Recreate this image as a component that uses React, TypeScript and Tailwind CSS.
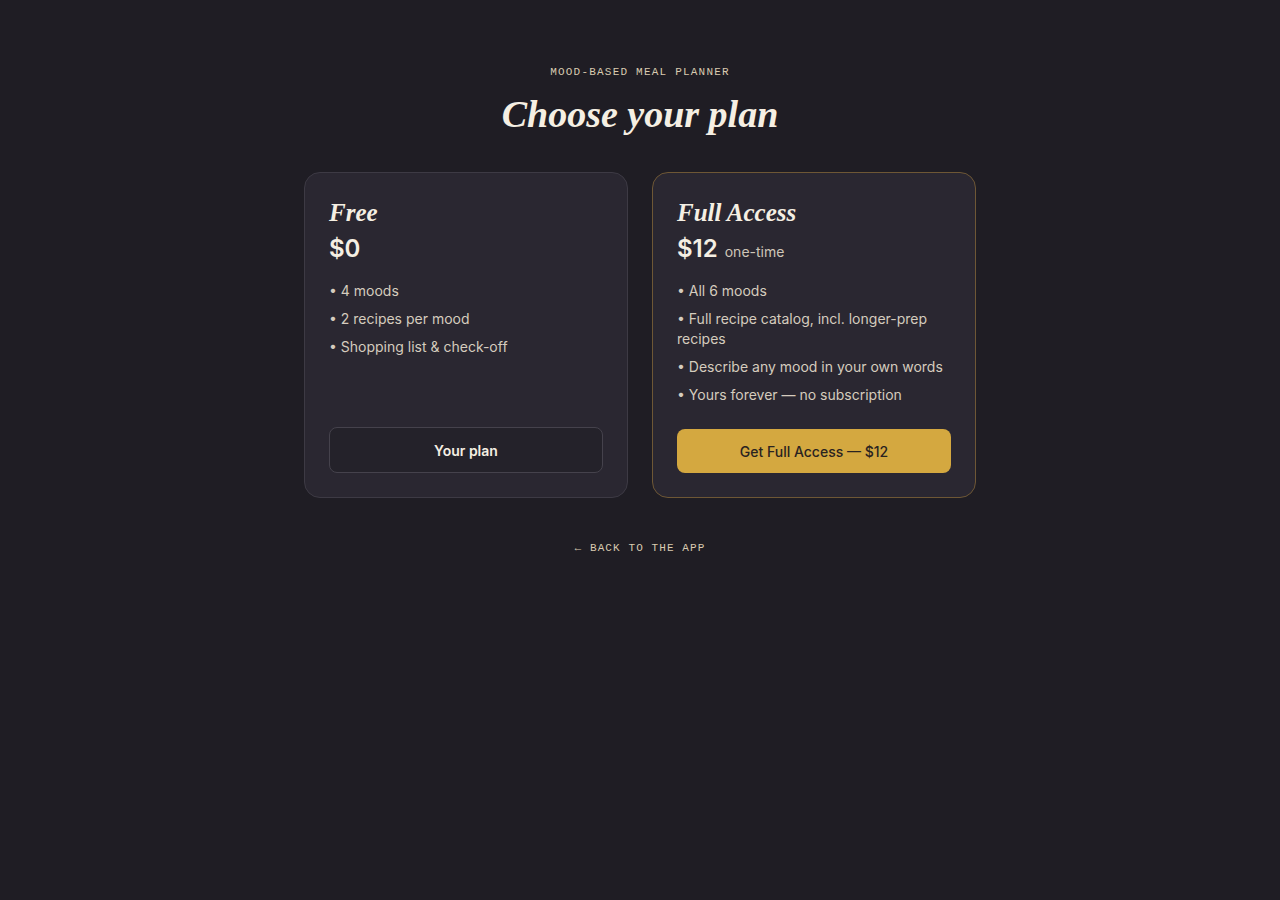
const serif = { fontFamily: '"Liberation Serif", "DejaVu Serif", serif' };

type Plan = {
  name: string;
  price: string;
  note?: string;
  features: string[];
  cta: string;
  current?: boolean;
};

const PLANS: Plan[] = [
  {
    name: "Free",
    price: "$0",
    features: ["4 moods", "2 recipes per mood", "Shopping list & check-off"],
    cta: "Your plan",
    current: true,
  },
  {
    name: "Full Access",
    price: "$12",
    note: "one-time",
    features: [
      "All 6 moods",
      "Full recipe catalog, incl. longer-prep recipes",
      "Describe any mood in your own words",
      "Yours forever — no subscription",
    ],
    cta: "Get Full Access — $12",
  },
];

export default function App() {
  return (
    <div
      className="min-h-[900px] w-full bg-[#1f1d24] text-[#f3ede2] pt-[64px]"
      style={{ fontFamily: 'Inter, "Noto Sans", sans-serif' }}
    >
      <div className="flex flex-col items-center">
        <p className="font-['Liberation_Mono',monospace] text-[11px] tracking-[0.11em] text-[#d9cbb0] leading-4">
          MOOD-BASED MEAL PLANNER
        </p>
        <h1
          className="mt-[14px] text-[38px] italic font-bold leading-[40px] text-[#f5efe3]"
          style={serif}
        >
          Choose your plan
        </h1>

        <div className="mt-[38px] grid w-full max-w-[672px] grid-cols-2 gap-6">
          {PLANS.map((plan) => (
            <div
              key={plan.name}
              className={`flex flex-col rounded-2xl border bg-[#2a2731] px-6 pt-[26px] pb-6 ${
                plan.current ? "border-[#3d3a44]" : "border-[#6e5735]"
              }`}
            >
              <h2
                className="text-[25px] italic font-bold leading-7 text-[#f5efe3]"
                style={serif}
              >
                {plan.name}
              </h2>
              <div className="mt-[6px] flex items-baseline gap-[7px]">
                <span className="text-[24px] font-semibold leading-8 text-[#f5efe3]">{plan.price}</span>
                {plan.note && <span className="text-[14px] text-[#cfc6b8]">{plan.note}</span>}
              </div>
              <ul className="mt-4 flex flex-col gap-2 text-[14px] leading-5 text-[#d5ccbe]">
                {plan.features.map((f) => (
                  <li key={f}>• {f}</li>
                ))}
              </ul>
              <div className="mt-auto pt-6">
                {plan.current ? (
                  <button className="h-[46px] w-full rounded-lg border border-[#45424c] bg-[#24222a] text-[14px] font-semibold text-[#f5efe3]">
                    {plan.cta}
                  </button>
                ) : (
                  <button className="h-[44px] w-full rounded-lg bg-[#d4a840] text-[14px] font-medium text-[#2a2320]">
                    {plan.cta}
                  </button>
                )}
              </div>
            </div>
          ))}
        </div>

        <a
          href="#"
          className="mt-[42px] font-['Liberation_Mono',monospace] text-[11px] tracking-[0.1em] text-[#d9cbb0] leading-4"
        >
          ← BACK TO THE APP
        </a>
      </div>
    </div>
  );
}
